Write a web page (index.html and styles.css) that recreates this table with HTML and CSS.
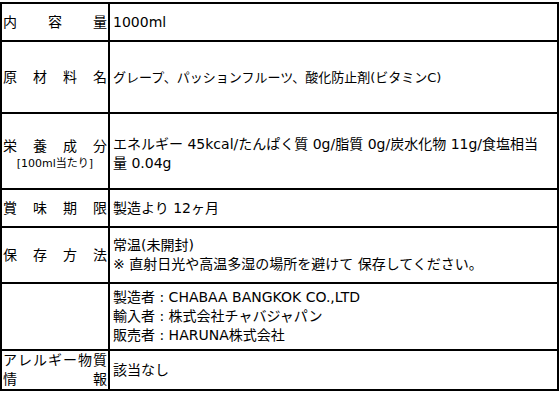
FILE: index.html
```html
<!DOCTYPE html>
<html lang="ja">
<head>
<meta charset="utf-8">
<link rel="stylesheet" href="styles.css">
</head>
<body>
<table class="spec">
  <tr class="row-vol">
    <th><div class="label">内容量</div></th>
    <td>1000ml</td>
  </tr>
  <tr class="row-raw">
    <th><div class="label">原材料名</div></th>
    <td>グレープ、パッションフルーツ、酸化防止剤(ビタミンC)</td>
  </tr>
  <tr class="row-nutr">
    <th><div class="label">栄養成分</div><div class="sub">[100ml当たり]</div></th>
    <td>エネルギー 45kcal/たんぱく質 0g/脂質 0g/炭水化物 11g/食塩相当<br>量 0.04g</td>
  </tr>
  <tr class="row-best">
    <th><div class="label">賞味期限</div></th>
    <td>製造より 12ヶ月</td>
  </tr>
  <tr class="row-store">
    <th><div class="label">保存方法</div></th>
    <td>常温(未開封)<br>※ 直射日光や高温多湿の場所を避けて 保存してください。</td>
  </tr>
  <tr class="row-maker">
    <th></th>
    <td>製造者 : CHABAA BANGKOK CO.,LTD<br>輸入者 : 株式会社チャバジャパン<br>販売者 : HARUNA株式会社</td>
  </tr>
  <tr class="row-allergy">
    <th><div class="label">アレルギー物質<br>情報</div></th>
    <td>該当なし</td>
  </tr>
</table>
</body>
</html>
```

FILE: styles.css
```css
html, body {
  margin: 0;
  padding: 0;
  background: #fff;
}
body {
  padding-top: 2px;
  font-family: "DejaVu Sans", "Noto Sans CJK JP", sans-serif;
  font-size: 14px;
  color: #000;
}
.spec {
  width: 559px;
  border-spacing: 0;
  border-top: 2px solid #000;
  border-left: 2px solid #000;
  table-layout: fixed;
}
.spec th,
.spec td {
  border-right: 2px solid #000;
  border-bottom: 2px solid #000;
  vertical-align: middle;
  line-height: 19px;
  font-weight: normal;
}
.spec th {
  width: 104px;
  padding: 0 1px 0 1px;
  font-size: 14px;
}
.spec td {
  padding: 0 3px;
  text-align: left;
  font-size: 14px;
}
.spec .row-raw td {
  font-size: 13px;
}
.spec .row-nutr th,
.spec .row-nutr td {
  padding-top: 6px;
}
.label {
  text-align: justify;
  text-align-last: justify;
}
.sub {
  text-align: center;
  font-size: 11px;
  line-height: 15px;
}
.row-vol { height: 38px; }
.row-raw { height: 72px; }
.row-nutr { height: 76px; }
.row-best { height: 38px; }
.row-store { height: 56px; }
.row-maker { height: 67px; }
.row-allergy { height: 38px; }
```
